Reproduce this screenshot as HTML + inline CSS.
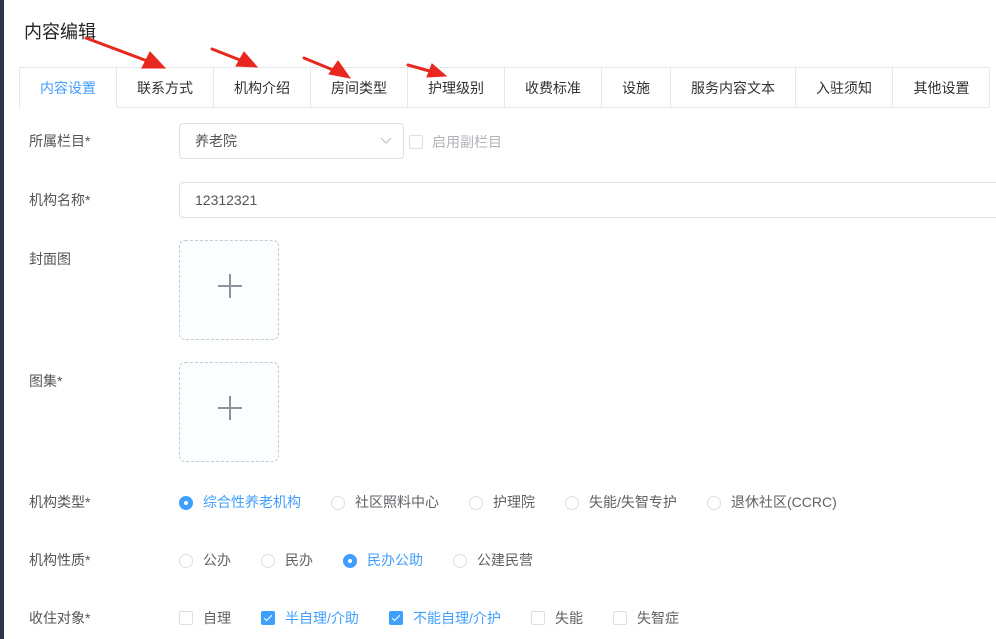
<!DOCTYPE html>
<html><head><meta charset="utf-8"><style>
*{margin:0;padding:0;box-sizing:border-box}
body{width:996px;height:639px;overflow:hidden;background:#fff;font-family:"Liberation Sans","Noto Sans CJK SC",sans-serif;color:#333;position:relative;font-size:14px}
.abs{position:absolute}
.bar{left:0;top:0;width:4px;height:639px;background:#2f3447}
.title{left:24px;top:18px;font-size:18px;color:#222}
.tabs{left:19px;top:67px;height:41px;width:971px;border:1px solid #e4e7ed;border-bottom:none;display:flex;background:#fff}
.tab{width:97px;flex:none;border-right:1px solid #e4e7ed;text-align:center;line-height:40px;font-size:14px;color:#303133;border-bottom:1px solid #e4e7ed}
.tab.on{color:#409eff;border-bottom-color:#fff}
.tab:last-child{border-right:none}
.lbl{left:29px;font-size:14px;color:#555}
.sel{left:179px;top:123px;width:225px;height:36px;border:1px solid #dcdfe6;border-radius:4px;padding-left:15px;line-height:34px;color:#555}
.inp{left:179px;top:182px;width:830px;height:36px;border:1px solid #dcdfe6;border-radius:4px;padding-left:15px;line-height:34px;color:#555}
.up{left:179px;width:100px;height:100px;border:1px dashed #c0ccda;border-radius:6px;background:#fbfdff}
.up:before{content:"";position:absolute;left:38px;top:44px;width:24px;height:1.5px;background:#8c939d}
.up:after{content:"";position:absolute;left:49px;top:33px;width:1.5px;height:24px;background:#8c939d}
.r{width:14px;height:14px;border:1px solid #dcdfe6;border-radius:50%;background:#fff}
.r.on{background:#409eff;border-color:#409eff}
.r.on:after{content:"";position:absolute;left:4px;top:4px;width:4px;height:4px;border-radius:50%;background:#fff}
.c{width:14px;height:14px;border:1px solid #dcdfe6;border-radius:2px;background:#fff}
.c.on{background:#409eff;border-color:#409eff}
.c.on:after{content:"";position:absolute;left:4px;top:1px;width:3px;height:7px;border:solid #fff;border-width:0 1px 1px 0;transform:rotate(45deg)}
.t{font-size:14px;color:#606266}
.t.on{color:#409eff}
</style></head><body>
<div class="abs bar"></div>
<div class="abs title">内容编辑</div>
<div class="abs tabs">
<div class="tab on">内容设置</div><div class="tab">联系方式</div><div class="tab">机构介绍</div><div class="tab">房间类型</div><div class="tab">护理级别</div><div class="tab">收费标准</div><div class="tab" style="width:69px">设施</div><div class="tab" style="width:125px">服务内容文本</div><div class="tab">入驻须知</div><div class="tab">其他设置</div>
</div>
<svg class="abs" style="left:0;top:0" width="500" height="100">
<g fill="#e8281f" stroke="#e8281f" stroke-width="3" stroke-linecap="round">
<line x1="86" y1="38" x2="150" y2="62"/><polygon points="165,68 142,68 150,52" stroke-width="1"/>
<line x1="212" y1="49" x2="245" y2="62"/><polygon points="257,67 236,66 244,52" stroke-width="1"/>
<line x1="304" y1="58" x2="338" y2="72"/><polygon points="350,78 329,74 338,61" stroke-width="1"/>
<line x1="408" y1="65" x2="433" y2="72"/><polygon points="446,76 427,77 432,64" stroke-width="1"/>
</g></svg>
<div class="abs lbl" style="top:131px">所属栏目*</div>
<div class="abs sel">养老院<svg class="abs" style="left:200px;top:13px" width="12" height="8"><path d="M1 1 L6 6 L11 1" fill="none" stroke="#c0c4cc" stroke-width="1.2"/></svg></div>
<div class="abs c" style="left:409px;top:135px"></div>
<div class="abs t" style="left:432px;top:132px;color:#b0b3b8">启用副栏目</div>
<div class="abs lbl" style="top:190px">机构名称*</div>
<div class="abs inp">12312321</div>
<div class="abs lbl" style="top:249px">封面图</div>
<div class="abs up" style="top:240px"></div>
<div class="abs lbl" style="top:371px">图集*</div>
<div class="abs up" style="top:362px"></div>
<div class="abs lbl" style="top:492px">机构类型*</div>
<div class="abs r on" style="left:179px;top:496px"></div><div class="abs t on" style="left:203px;top:492px">综合性养老机构</div>
<div class="abs r" style="left:331px;top:496px"></div><div class="abs t" style="left:355px;top:492px">社区照料中心</div>
<div class="abs r" style="left:469px;top:496px"></div><div class="abs t" style="left:493px;top:492px">护理院</div>
<div class="abs r" style="left:565px;top:496px"></div><div class="abs t" style="left:589px;top:492px">失能/失智专护</div>
<div class="abs r" style="left:707px;top:496px"></div><div class="abs t" style="left:731px;top:492px">退休社区(CCRC)</div>
<div class="abs lbl" style="top:550px">机构性质*</div>
<div class="abs r" style="left:179px;top:554px"></div><div class="abs t" style="left:203px;top:550px">公办</div>
<div class="abs r" style="left:261px;top:554px"></div><div class="abs t" style="left:285px;top:550px">民办</div>
<div class="abs r on" style="left:343px;top:554px"></div><div class="abs t on" style="left:367px;top:550px">民办公助</div>
<div class="abs r" style="left:453px;top:554px"></div><div class="abs t" style="left:477px;top:550px">公建民营</div>
<div class="abs lbl" style="top:608px">收住对象*</div>
<div class="abs c" style="left:179px;top:611px"></div><div class="abs t" style="left:203px;top:608px">自理</div>
<div class="abs c on" style="left:261px;top:611px"></div><div class="abs t on" style="left:285px;top:608px">半自理/介助</div>
<div class="abs c on" style="left:389px;top:611px"></div><div class="abs t on" style="left:413px;top:608px">不能自理/介护</div>
<div class="abs c" style="left:531px;top:611px"></div><div class="abs t" style="left:555px;top:608px">失能</div>
<div class="abs c" style="left:613px;top:611px"></div><div class="abs t" style="left:637px;top:608px">失智症</div>
</body></html>
